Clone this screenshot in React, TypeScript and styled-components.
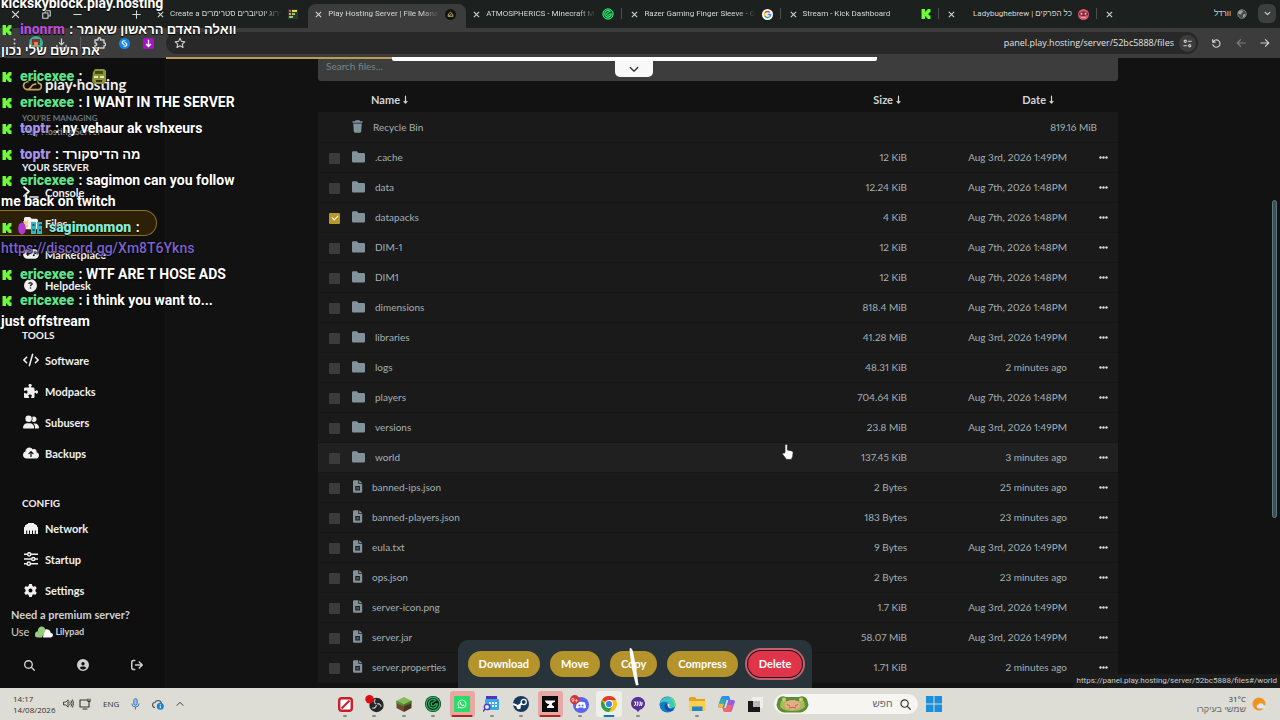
import React from 'react';
import styled, { createGlobalStyle, css } from 'styled-components';
import {
  FaCode, FaPuzzlePiece, FaUserGroup, FaCloudArrowUp, FaGear, FaMagnifyingGlass, FaCircleUser,
  FaArrowRightFromBracket, FaCircleQuestion, FaGamepad, FaFolder, FaWhatsapp,
} from 'react-icons/fa6';

const pageFont = "Lato, 'Liberation Sans', sans-serif";
const chromeFont = "'Open Sans', 'Liberation Sans', sans-serif";
const smallChromeFont = "Roboto, 'Liberation Sans', sans-serif";

const GlobalStyle = createGlobalStyle`
  * { box-sizing: border-box; }
  body { margin: 0; background: #121212; }
  button { border: 0; padding: 0; background: none; color: inherit; font: inherit; }
  a { color: inherit; text-decoration: none; }
  svg { display: block; flex: none; }
`;

const Screen = styled.div`
  position: relative;
  display: flex;
  flex-direction: column;
  height: 100vh;
  min-width: 1000px;
  overflow: hidden;
  font-family: ${pageFont};
`;

/* ---------- browser frame ---------- */

const TabStrip = styled.header`
  flex: none;
  display: flex;
  height: 28px;
  background: #1c201f;
  font: 8px/14px ${smallChromeFont};
  color: #d5d8d7;
`;

const WindowControls = styled.div`
  flex: none;
  display: flex;
  align-items: center;
  justify-content: space-between;
  width: 150px;
  padding: 0 8px 0 9px;
`;

const ControlButton = styled.button<{ $push?: boolean }>`
  display: grid;
  place-items: center;
  width: 12px;
  height: 20px;
  margin-left: ${p => (p.$push ? '28px' : '0')};
`;

const TabList = styled.nav`
  flex: 1;
  min-width: 0;
  display: flex;
`;

const Tab = styled.div<{ $active?: boolean; $divider?: boolean }>`
  position: relative;
  flex: 1;
  min-width: 0;
  display: flex;
  align-items: center;
  gap: 6px;
  padding: 0 10px 4px 7px;
  margin-top: 4px;
  border-radius: 8px 8px 0 0;
  ${p => p.$active && css`background: #3c3c3c;`}
  ${p => p.$divider && css`
    &::after {
      content: '';
      position: absolute;
      right: 2px;
      top: 4px;
      width: 1px;
      height: 11px;
      background: #4b504e;
    }
  `}
`;

const TabTitle = styled.span<{ $rtl?: boolean }>`
  flex: 1;
  min-width: 0;
  overflow: hidden;
  white-space: nowrap;
  text-align: ${p => (p.$rtl ? 'right' : 'left')};
  mask-image: ${p => (p.$rtl ? 'none' : 'linear-gradient(to right, #000 84%, transparent)')};
`;

const TabSearch = styled.button`
  flex: none;
  display: grid;
  place-items: center;
  width: 18px;
  height: 19px;
  margin: 4px 4px 0 1px;
  border-radius: 6px;
  background: #3c3f3e;
`;

const Toolbar = styled.div`
  flex: none;
  display: flex;
  align-items: center;
  height: 30px;
  background: #3c3c3c;
  color: #cfcfcf;
`;

const ToolGroup = styled.div<{ $width: number; $pad: string }>`
  flex: none;
  display: flex;
  align-items: center;
  justify-content: space-between;
  width: ${p => p.$width}px;
  padding: ${p => p.$pad};
`;

const ToolButton = styled.button<{ $dim?: boolean }>`
  opacity: ${p => (p.$dim ? 0.45 : 1)};
`;

const ToolDivider = styled.span`
  width: 1px;
  height: 12px;
  background: #5a5a5a;
`;

const AddressBar = styled.div`
  flex: 1;
  display: flex;
  align-items: center;
  justify-content: space-between;
  gap: 5px;
  height: 22px;
  padding: 0 2px 0 8px;
  border-radius: 11px;
  background: #282828;
`;

const AddressInput = styled.input`
  flex: 1;
  min-width: 0;
  border: 0;
  padding: 0;
  background: none;
  color: #e2e2e2;
  font: 9px/16px ${chromeFont};
  text-align: right;
`;

const SiteInfo = styled.button`
  display: grid;
  place-items: center;
  width: 17px;
  height: 17px;
  border-radius: 9px;
  background: #3d3d3d;
`;

/* ---------- panel page ---------- */

const Viewport = styled.div`
  position: relative;
  flex: 1;
  min-height: 0;
  display: flex;
  background: #121212;
`;

const Sidebar = styled.aside`
  flex: none;
  display: flex;
  flex-direction: column;
  width: 166px;
  padding-top: 14px;
  border-right: 1px solid #131313;
  background: #0f0f0f;
  color: #f0f0f0;
`;

const Brand = styled.a`
  display: flex;
  align-items: center;
  gap: 3px;
  height: 24px;
  padding-left: 22px;
  font-size: 15px;
  font-weight: 700;
`;

const Managing = styled.p`
  margin: 16px 0 0;
  padding-left: 22px;
  font-size: 8px;
  line-height: 13px;
  font-weight: 700;
  color: #6b757e;
`;

const ServerName = styled.span`
  display: block;
  font-size: 9px;
  color: #8a8a8a;
`;

const NavSection = styled.section<{ $gap: number }>`
  display: flex;
  flex-direction: column;
  gap: 5px;
  margin-top: ${p => p.$gap}px;
`;

const NavHeading = styled.h2`
  margin: 0;
  padding-left: 22px;
  font-size: 10px;
  line-height: 14px;
  font-weight: 700;
`;

const NavLink = styled.a<{ $active?: boolean }>`
  display: flex;
  align-items: center;
  gap: 6px;
  height: 26px;
  margin-right: 8px;
  padding-left: 22px;
  border: 1px solid ${p => (p.$active ? '#8b7224' : 'transparent')};
  border-left: 0;
  border-radius: 0 13px 13px 0;
  background: ${p => (p.$active ? '#2c2106' : 'transparent')};
  font-size: 11px;
  font-weight: 700;
`;

const NavIcon = styled.span`
  display: grid;
  place-items: center;
  width: 17px;
`;

const Promo = styled.div`
  margin-top: auto;
  padding-left: 11px;
  font-size: 11px;
  line-height: 17px;
  font-weight: 700;
  color: #cdd0d2;
`;

const PromoLink = styled.a`
  display: flex;
  align-items: center;
  gap: 6px;
  font-weight: 400;
`;

const LilypadName = styled.span`
  display: flex;
  align-items: center;
  gap: 2px;
  font-size: 9px;
  font-weight: 700;
`;

const SidebarTools = styled.div`
  display: flex;
  justify-content: space-between;
  padding: 19px 22px 17px 24px;
  color: #d0d0d0;
`;

const Main = styled.main`
  flex: 1;
  min-width: 0;
  overflow: hidden;
  display: flex;
  flex-direction: column;
  align-items: center;
`;

const Files = styled.div`
  width: 100%;
  max-width: 800px;
`;

const SearchInput = styled.input`
  display: block;
  width: 100%;
  height: 23px;
  padding: 0 8px 7px;
  border: 0;
  border-radius: 0 0 3px 3px;
  background: #3d3d3d;
  color: #d0d0d0;
  font: 10px/16px ${pageFont};
  &::placeholder { color: #77858c; opacity: 1; }
`;

const FileTable = styled.table`
  width: 100%;
  table-layout: fixed;
  border-collapse: collapse;
  font-size: 10px;
  font-variant-numeric: proportional-nums;
  color: #a3b0b5;
`;

const HeadCell = styled.th<{ $width?: number; $right?: number }>`
  width: ${p => (p.$width ? `${p.$width}px` : 'auto')};
  height: 31px;
  padding: 5px ${p => p.$right ?? 0}px 0 0;
  text-align: ${p => (p.$right ? 'right' : 'left')};
  font-size: 11px;
  font-weight: 700;
  color: #cfd5d6;
`;

const SortButton = styled.button<{ $indent?: boolean }>`
  display: inline-flex;
  align-items: center;
  gap: 3px;
  padding-left: ${p => (p.$indent ? '19px' : '0')};
`;

const Row = styled.tr<{ $hover?: boolean }>`
  height: 30px;
  background: ${p => (p.$hover ? '#202020' : '#1a1a1a')};
  border-bottom: 1px solid #161616;
`;

const Cell = styled.td<{ $right?: boolean }>`
  padding: 0;
  text-align: ${p => (p.$right ? 'right' : 'left')};
  white-space: nowrap;
`;

const EndCell = styled(Cell)`
  padding-right: 21px;
`;

const CheckCell = styled(Cell)`
  padding: 2px 0 0 11px;
`;

const Check = styled.input`
  display: grid;
  place-items: center;
  appearance: none;
  width: 11px;
  height: 11px;
  margin: 0;
  border-radius: 1px;
  background: #3b3b3b;
  &:checked { background: #b8962a; }
  &:checked::after {
    content: '';
    width: 5px;
    height: 3px;
    border: solid #fff;
    border-width: 0 0 1px 1px;
    rotate: -45deg;
    translate: 0 -1px;
  }
`;

const FileLink = styled.a<{ $folder?: boolean }>`
  display: flex;
  align-items: center;
  gap: ${p => (p.$folder ? '10px' : '9px')};
  color: #a3b0b5;
  svg { color: #82929a; margin-bottom: 1px; }
`;

const MoreButton = styled.button`
  display: block;
  margin-left: 32px;
  color: #e0e0e0;
`;

const ScrollTrack = styled.div`
  flex: none;
  width: 10px;
  padding: 142px 3px 0 2px;
`;

const ScrollThumb = styled.div`
  height: 318px;
  border: 1px solid #5c7880;
  border-radius: 3px;
  background: #3c4f56;
`;

/* ---------- things that float over the page ---------- */

const LoadingLine = styled.div`
  position: absolute;
  left: 166px;
  right: 69%;
  top: -1px;
  height: 2px;
  background: #b89f55;
`;

const Drawer = styled.div`
  position: absolute;
  left: 0;
  right: 12px;
  top: -1px;
  display: flex;
  flex-direction: column;
  align-items: center;
  pointer-events: none;
`;

const DrawerEdge = styled.div`
  width: 485px;
  height: 4px;
  border-radius: 0 0 2px 2px;
  background: #fff;
`;

const DrawerHandle = styled.button`
  display: grid;
  place-items: center;
  width: 38px;
  height: 16px;
  border-radius: 0 0 5px 5px;
  background: #f8f8f8;
  color: #333;
`;

const ActionLayer = styled.div`
  position: absolute;
  left: 0;
  right: 10px;
  bottom: 0;
  display: flex;
  justify-content: center;
`;

const ActionBar = styled.div`
  display: flex;
  gap: 10px;
  height: 48px;
  padding: 11px 10px 0;
  border-radius: 10px 10px 0 0;
  background: #28343a;
`;

const ActionButton = styled.button<{ $danger?: boolean }>`
  height: 26px;
  padding: 0 11px 1px;
  border-radius: 13px;
  background: ${p => (p.$danger ? '#e0344a' : '#b4942b')};
  color: #fff;
  font-size: 11px;
  font-weight: 700;
  ${p => p.$danger && css`box-shadow: 0 0 0 1px #241318, 0 0 0 3px #c2606e;`}
`;

const Slash = styled.svg`
  position: absolute;
  left: 628px;
  bottom: 0;
`;

const Pointer = styled.svg`
  position: absolute;
  left: 781px;
  top: 385px;
`;

const StatusBubble = styled.div`
  position: absolute;
  right: 0;
  bottom: 0;
  padding: 0 3px 0 4px;
  background: #1b1b1b;
  color: #c9cccc;
  font: 8px/14px ${smallChromeFont};
`;

const Chat = styled.section`
  position: absolute;
  left: 0;
  top: -9px;
  color: #fff;
  font: 700 14px/21px Roboto, 'Liberation Sans', sans-serif;
  text-shadow: 0 0 1px #000, 0 1px 1px #000;
  white-space: nowrap;
`;

const Message = styled.p`
  margin: 0;
  padding: 2px 1px 3px;
`;

const MessageLine = styled.span`
  display: flex;
  align-items: center;
  height: 21px;
`;

const Badges = styled.span<{ $wide?: boolean }>`
  display: flex;
  align-items: center;
  gap: 5px;
  width: ${p => (p.$wide ? '48px' : '19px')};
  padding-left: 1px;
`;

const Author = styled.b<{ $color: string }>`
  margin-right: 1px;
  color: ${p => p.$color};
`;

const Body = styled.span<{ $hebrew?: boolean }>`
  font-size: ${p => (p.$hebrew ? '13px' : '14px')};
  white-space: pre;
`;

const ChatLink = styled.a`
  color: #7d62cc;
  font-weight: 500;
`;

/* ---------- taskbar ---------- */

const Taskbar = styled.footer`
  flex: none;
  display: grid;
  grid-template-columns: 1fr auto 1fr;
  align-items: center;
  height: 32px;
  background: #dddcd5;
  color: #333;
  font: 8px/10px ${chromeFont};
`;

const Tray = styled.div`
  display: flex;
  align-items: center;
  padding-left: 13px;
`;

const Clock = styled.time`
  width: 50px;
  line-height: 11px;
`;

const TrayIcons = styled.div`
  display: flex;
  align-items: center;
  gap: 12px;
`;

const TrayPair = styled.div`
  display: flex;
  gap: 5px;
`;

const Dock = styled.div`
  display: flex;
  align-items: center;
`;

const Apps = styled.div`
  display: flex;
  width: 440px;
`;

const AppButton = styled.button<{ $tint?: string; $mark?: string }>`
  position: relative;
  flex: 1;
  display: grid;
  place-items: center;
  height: 26px;
  margin: 0 2px;
  border-radius: 3px;
  background: ${p => p.$tint ?? 'transparent'};
  &::after {
    content: '';
    position: absolute;
    left: 50%;
    bottom: 0;
    width: ${p => (p.$tint ? (p.$mark === '#b3261e' ? 21 : 11) : 4)}px;
    height: 2px;
    border-radius: 1px;
    translate: -50% 0;
    background: ${p => p.$mark ?? 'transparent'};
  }
`;

const SearchPill = styled.label`
  display: flex;
  align-items: center;
  gap: 7px;
  width: 144px;
  height: 20px;
  margin-left: 3px;
  padding: 0 7px 0 2px;
  border-radius: 10px;
  background: #f6f5f1;
`;

const PillInput = styled.input`
  flex: 1;
  min-width: 0;
  border: 0;
  padding: 0;
  background: none;
  font: 10px/14px 'Liberation Sans', sans-serif;
  text-align: right;
  &::placeholder { color: #666; opacity: 1; }
`;

const StartButton = styled.button`
  display: grid;
  place-items: center;
  width: 32px;
  height: 26px;
`;

const Weather = styled.div`
  display: flex;
  align-items: center;
  justify-content: flex-end;
  gap: 6px;
  padding-right: 13px;
  text-align: right;
  line-height: 10px;
`;

const WeatherNote = styled.span`
  display: block;
  color: #6a6a66;
  font: 9px/10px 'Liberation Sans', sans-serif;
`;

/* ---------- drawings ---------- */

const CrossIcon = ({ size = 7 }: { size?: number }) => (
  <svg width={size} height={size} viewBox="0 0 8 8" stroke="currentColor" strokeWidth="1.2"><path d="M1 1l6 6M7 1L1 7" /></svg>
);

const KickMark = ({ size = 10 }: { size?: number }) => (
  <svg width={size} height={size} viewBox="0 0 10 10"><rect width="10" height="10" fill="#0b1a06" /><path fill="#6dfb3a" d="M.5 0h3.500v2.500h1.200V1.200h1.200V0h3.100v3.500H8.300v1H7.300v1h1v1h1.200V10H6.400V8.800H5.200V7.500H4V10H.5z" /></svg>
);

const CloudLoop = ({ w = 20, h = 14, color = '#c9a552' }) => (
  <svg width={w} height={h} viewBox="0 0 20 14" fill="none" stroke={color} strokeWidth="1.7" strokeLinecap="round" strokeLinejoin="round">
    <path d="M5 12.6h11a3.2 3.2 0 0 0 .4-6.4A5.2 5.2 0 0 0 6.3 4.6 4 4 0 0 0 5 12.6c2.500 0 3.300-1.700 4.400-3.200 1-1.500 2.300-2.500 4.200-2.200" />
  </svg>
);

const GoogleMark = () => (
  <svg width="11" height="11" viewBox="0 0 22 22">
    <circle cx="11" cy="11" r="11" fill="#fff" />
    <g fill="none" strokeWidth="3">
      <path d="M15.600 6.800A6.200 6.200 0 0 0 5.700 8" stroke="#ea4335" />
      <path d="M5.700 8a6.200 6.200 0 0 0 0 6" stroke="#fbbc05" />
      <path d="M5.700 14a6.200 6.200 0 0 0 9.500 1.600" stroke="#34a853" />
      <path d="M15.200 15.600A6.200 6.200 0 0 0 17.200 11H11" stroke="#4285f4" />
    </g>
  </svg>
);

const SwirlMark = ({ size, bg, fg }: { size: number; bg: string; fg: string }) => (
  <svg width={size} height={size} viewBox="0 0 22 22" fill="none">
    <circle cx="11" cy="11" r="11" fill={bg} />
    <circle cx="11" cy="11" r="9.300" stroke={fg} strokeWidth="1.800" />
    <path d="M15.500 6.700A6 6 0 1 0 17 11h-3.500" stroke={fg} strokeWidth="1.900" />
    <path d="M13.500 11A2.500 2.500 0 1 1 11 8.500L14.500 6" stroke={fg} strokeWidth="1.700" />
  </svg>
);

const TableMark = () => (
  <svg width="10" height="10" viewBox="0 0 10 10"><rect width="10" height="10" fill="#333" />
    <path fill="#e0554f" d="M1 1h2v2H1z" /><path fill="#e6a645" d="M1 4h2v2H1z" /><path fill="#7ed957" d="M1 7h4v2H1z" />
    <path fill="#e8d75b" d="M4 1h5v2H4z" /><path fill="#7ed957" d="M4 4h3v2H4z" />
  </svg>
);

const LadybugMark = () => (
  <svg width="11" height="11" viewBox="0 0 11 11"><circle cx="5.500" cy="5.500" r="5.500" fill="#d4596c" /><path d="M1 4q4.500-3 9 0v2q-4.500 2-9 0z" fill="#7d2535" /><circle cx="3.500" cy="4.800" r="1" fill="#f4c7ce" /><circle cx="7.500" cy="4.800" r="1" fill="#f4c7ce" /><path d="M3 8.500h5" stroke="#f0a0ad" /></svg>
);

const GlobeMark = () => (
  <svg width="10" height="10" viewBox="0 0 10 10"><circle cx="5" cy="5" r="4.300" fill="#454a48" stroke="#8a8f8d" strokeWidth=".8" /><path fill="#9da19f" d="M2 2l3-.8L6 3 4.500 4 4 5.500 2 5 1 4zM6 5.500l2.500-.5-.5 2.500-2 1z" /></svg>
);

const Line = ({ d, w = 10, h = 10, box = '0 0 12 12', sw = 1.4 }: { d: string; w?: number; h?: number; box?: string; sw?: number }) => (
  <svg width={w} height={h} viewBox={box} fill="none" stroke="currentColor" strokeWidth={sw} strokeLinecap="round" strokeLinejoin="round"><path d={d} /></svg>
);

const FolderIcon = () => (
  <svg width="13" height="12" viewBox="0 0 13 12" fill="currentColor"><path d="M1.300.3h3.500l1.700 1.600h5.200A1.300 1.300 0 0 1 13 3.200v7A1.300 1.300 0 0 1 11.700 11.500H1.300A1.300 1.300 0 0 1 0 10.200V1.600A1.300 1.300 0 0 1 1.300.3z" /></svg>
);

const FileIcon = () => (
  <svg width="11" height="13" viewBox="0 0 11 13" fill="currentColor" fillRule="evenodd"><path d="M2.300.3h4v3.500h3.900v7.600a1.300 1.300 0 0 1-1.300 1.300H2.300A1.300 1.300 0 0 1 1 11.400V1.600A1.300 1.300 0 0 1 2.300.3zM3.300 6v4.500h4.600V6zM7.200.3l3 2.700h-3z" /><path d="M4.300 7h2.600v2.500H4.300z" opacity=".5" /></svg>
);

const TrashIcon = () => (
  <svg width="11" height="13" viewBox="0 0 11 13" fill="currentColor"><path d="M3.500.3h4l.5.900h2.500v1.600H.500V1.200H3zM1.200 3.500h8.600l-.6 8.100a1.200 1.200 0 0 1-1.200 1.100H3a1.200 1.200 0 0 1-1.200-1.100z" /></svg>
);

const DotsIcon = () => (
  <svg width="9" height="3" viewBox="0 0 9 3" fill="currentColor"><circle cx="1.500" cy="1.500" r="1.200" /><circle cx="4.500" cy="1.500" r="1.200" /><circle cx="7.500" cy="1.500" r="1.200" /></svg>
);

const ArrowDown = () => <Line w={5} h={9} box="0 0 5 9" sw={1.2} d="M2.500 1v7M1 6.400l1.500 1.600L4 6.400" />;

const NetworkIcon = () => (
  <svg width="14" height="11" viewBox="0 0 14 11" fill="currentColor"><path d="M4 0h6v1h1.500v1H13v2h1v7h-2.200V7.500h-1V11H9V7.500H8V11H6V7.500H5V11H3.200V7.500h-1V11H0V4h1V2h1.500V1H4z" /></svg>
);

const SlidersIcon = () => (
  <svg width="14" height="14" viewBox="0 0 14 14" fill="none" stroke="currentColor" strokeWidth="1.500"><path d="M0 2.300h3.500M7 2.300h7M0 7h7.500M11 7h3M0 11.700h3M6.500 11.700H14" /><circle cx="5.200" cy="2.300" r="1.600" /><circle cx="9.300" cy="7" r="1.600" /><circle cx="4.800" cy="11.700" r="1.600" /></svg>
);

const LilypadIcon = () => (
  <svg width="18" height="12" viewBox="0 0 18 12"><path d="M8 11.500h7.500a2.300 2.300 0 0 0 .3-4.600A4 4 0 0 0 9 4.500z" fill="#fff" /><path d="M0 8.500C0 6 1.500 5.500 3 5.300 2.500 2.500 4.500.3 7 .5c3 .3 4 3 2.800 5.500C8.700 8.500 7.500 9.500 7 11.500H2.500A2.600 2.600 0 0 1 0 8.500z" fill="#94cc7c" /></svg>
);

const ChromeIcon = () => (
  <svg width="16" height="16" viewBox="0 0 16 16"><circle cx="8" cy="8" r="8" fill="#fbc116" /><path d="M8 8L1.070 4A8 8 0 0 1 14.930 4H8z" fill="#e33b2e" /><path d="M1.070 4A8 8 0 0 0 8 16l3.460-6L8 8l-3.460 2z" fill="#2ba24c" /><circle cx="8" cy="8" r="4" fill="#fff" /><circle cx="8" cy="8" r="3.100" fill="#3f7ff0" /></svg>
);

const dockApps: { name: string; tint?: string; mark?: string; icon: React.ReactNode }[] = [
  { name: 'Stop tool', mark: '#8b8b86', icon: <svg width="15" height="15" viewBox="0 0 15 15" fill="none"><rect x="1.200" y="1.200" width="12.600" height="12.600" rx="2.500" fill="#fff" stroke="#c71f2d" strokeWidth="2.400" /><path d="M3.500 11.500L11.500 3.500" stroke="#c71f2d" strokeWidth="2" /></svg> },
  { name: 'OBS', mark: '#8b8b86', icon: <svg width="19" height="18" viewBox="0 0 19 18"><circle cx="11.500" cy="10" r="7.200" fill="#25262a" /><g fill="none" stroke="#b9babd" strokeWidth="1.300"><path d="M11 9c-2-1-2.200-3.500-.5-4.700" /><path d="M11.800 9c2-.8 4.200.5 4.200 2.700" /><path d="M11.300 10c0 2.300-2 3.700-4 2.800" /></g><circle cx="4.500" cy="4.300" r="4.200" fill="#e30b13" /></svg> },
  { name: 'Minecraft', mark: '#8b8b86', icon: <svg width="16" height="17" viewBox="0 0 16 17"><path d="M8 1l7.500 3.700L8 8.500.5 4.700z" fill="#84bd53" /><path d="M.5 4.700L8 8.500V16L.500 12z" fill="#6d4a30" /><path d="M15.500 4.700L8 8.500V16l7.500-4z" fill="#4e3420" /><path d="M.5 4.700L8 8.500v2L6 9v1.500L4 8v1.500L2 7.500 .5 8z" fill="#57913a" /><path d="M15.500 4.700L8 8.500v2l2-1.500v1l2-2v1l3.500-2z" fill="#467a2e" /></svg> },
  { name: 'Swirl', mark: '#8b8b86', icon: <SwirlMark size={16} bg="#0c1a12" fg="#24b862" /> },
  { name: 'WhatsApp', tint: '#e5a8a5', mark: '#b3261e', icon: <svg width="16" height="16" viewBox="0 0 16 16"><rect width="16" height="16" rx="1" fill="#2bdc68" /><g color="#fff"><FaWhatsapp x="3" y="3" size={10} /></g></svg> },
  { name: 'Search calendar', mark: '#8b8b86', icon: <svg width="17" height="16" viewBox="0 0 17 16"><rect x="3" y="0" width="11" height="4" fill="#5433b8" /><rect x="2" y="3" width="14" height="11" rx="1" fill="#36a8ef" /><g fill="#fff"><path d="M6 6h2v2H6zM9 6h2v2H9zM12 6h2v2h-2zM9 9h2v2H9zM12 9h2v2h-2z" /></g><circle cx="4" cy="11" r="2.700" fill="#dceafc" stroke="#5136b5" strokeWidth="1.300" /><path d="M2 13l-2 2.500" stroke="#5136b5" strokeWidth="1.500" /></svg> },
  { name: 'Steam', mark: '#8b8b86', icon: <svg width="16" height="16" viewBox="0 0 16 16"><circle cx="8" cy="8" r="8" fill="#17395f" /><path d="M0 8l5 2.200 3-2 3-3.500" stroke="#fff" strokeWidth="2" fill="none" /><circle cx="10.700" cy="6" r="2.600" fill="#17395f" stroke="#fff" strokeWidth="1.200" /><circle cx="5.700" cy="11" r="2.200" fill="#fff" /></svg> },
  { name: 'Anvil', tint: '#e5a8a5', mark: '#b3261e', icon: <svg width="16" height="16" viewBox="0 0 16 16"><rect width="16" height="16" fill="#0c0c0c" /><path fill="#fff" d="M3 4.500h10V6c-2 0-3 1-3 2v1l2 1.500V12H5v-1.500L7 9V8C5 8 3.500 6.500 3 4.500z" /></svg> },
  { name: 'Discord', mark: '#8b8b86', icon: <svg width="19" height="18" viewBox="0 0 19 18"><circle cx="11" cy="10" r="8" fill="#5865f2" /><path fill="#fff" d="M7 7.500q4-1.600 8 0l1.200 5q-1.200 1-2.400 1l-.6-1H8.800l-.6 1q-1.200 0-2.400-1z" /><circle cx="9.400" cy="10.500" r="1" fill="#5865f2" /><circle cx="12.600" cy="10.500" r="1" fill="#5865f2" /><circle cx="4.700" cy="4.700" r="4.700" fill="#d0343c" /><text x="4.700" y="7" textAnchor="middle" fontSize="6" fill="#fff" fontFamily="Roboto">9+</text></svg> },
  { name: 'Chrome', tint: '#eeeeea', mark: '#1473b8', icon: <ChromeIcon /> },
  { name: 'Voice chat', mark: '#8b8b86', icon: <svg width="14" height="15" viewBox="0 0 14 15"><path d="M7 0a6.500 6.500 0 0 1 2 12.800L7 15l-2-2.200A6.500 6.500 0 0 1 7 0z" fill="#57309c" /><path d="M3.200 5h1.300v2.200L3.500 9M5.800 5h1v2.200l-1 1.800M8.500 5h.8v2.200l-1 1.800M11 5v2.200L10 9" stroke="#fff" strokeWidth="1.100" fill="none" /></svg> },
  { name: 'Edge', icon: <svg width="17" height="17" viewBox="0 0 17 17"><circle cx="8.500" cy="8.500" r="8" fill="#1479c9" /><path d="M.7 7.500A8 8 0 0 1 16.500 8c0 3-2.500 4-4.500 4-1.500 0-2-.8-1.500-1.500C12 7 6 3.500.7 7.500z" fill="#3fc6c0" /><path d="M10 1a8 8 0 0 1 6.500 7c0 1.500-.6 2.600-1.500 3.200C15.500 7 13 3 10 1z" fill="#6adf6a" /><path d="M6 8.500c-1.500 3 1 7 6 6.500 1.500-.2 2.500-1 3-1.600C11 14 8 12 8.500 8.500 8 7.500 6.500 7.500 6 8.500z" fill="#0d4f9c" /><path d="M10.500 10.500C11.500 8.500 10 7 8.500 7.800 8 9.500 9 11.500 11 12.200l2-.3c-1.500.1-3-.4-2.500-1.400z" fill="#dddcd5" /></svg> },
  { name: 'Explorer', mark: '#8b8b86', icon: <svg width="17" height="15" viewBox="0 0 17 15"><path d="M0 1.500Q0 0 1.500 0H6l1.500 2H16v11.500H0z" fill="#e2a322" /><path d="M0 4h16.500v9.500H0z" fill="#fbd14b" /><path d="M3 9.500h10.500V14H3z" fill="#2382cd" /></svg> },
  { name: 'Copilot', icon: <svg width="17" height="16" viewBox="0 0 17 16"><path d="M5 0h6l1.500 4H8.500L6 12H2C.500 12 0 10.500.5 9L3 1.500Q3.500 0 5 0z" fill="#2f8fea" /><path d="M1 7.500h5L4.500 12H2Q0 12 .500 9.500z" fill="#f4b83a" /><path d="M12 16H6l-1.500-4H8l2.500-8H15q2 0 1.500 3L14 14.500Q13.500 16 12 16z" fill="#c35ad0" /><path d="M4.500 12H8l1.500-4H14l-2 8H6z" fill="#ee6a6a" /><path d="M10.500 4L9 9h5l2.500-2Q17 4 15 4z" fill="#8c62e0" /><path d="M2.500 3L1 7.500h5L7.500 3z" fill="#31b98b" opacity=".7" /></svg> },
  { name: 'Window layout', icon: <svg width="15" height="15" viewBox="0 0 15 15"><rect x="4" y="0" width="11" height="11" fill="#efefec" /><path d="M0 4h5v6h7v5H0z" fill="#191919" /><path d="M5 4h7v6H5z" fill="#b9b9b5" /></svg> },
];

/* ---------- data ---------- */

const tabs: { title: string; icon: React.ReactNode; active?: boolean; divider?: boolean; rtl?: boolean }[] = [
  { title: 'Create a דירוג יוטיוברים סטרימרים', icon: <TableMark /> },
  { title: 'Play Hosting Server | File Manager', active: true, icon: <svg width="11" height="11" viewBox="0 0 11 11"><circle cx="5.500" cy="5.500" r="5.500" fill="#141414" /><path d="M3 7.300h5L7.500 5 5.500 3.300 3.500 5zM4 7l2.500-2" fill="none" stroke="#c9b752" strokeWidth=".9" /></svg> },
  { title: 'ATMOSPHERICS - Minecraft Modpack', divider: true, icon: <SwirlMark size={12} bg="#0f5a2c" fg="#38ef79" /> },
  { title: 'Razer Gaming Finger Sleeve - Google', divider: true, icon: <GoogleMark /> },
  { title: 'Stream - Kick Dashboard', divider: true, icon: <KickMark /> },
  { title: 'כל הפרקים | Ladybughebrew', divider: true, rtl: true, icon: <LadybugMark /> },
  { title: 'וורדל', rtl: true, icon: <GlobeMark /> },
];

const navSections = [
  { title: 'YOUR SERVER', gap: 22, items: [
    { label: 'Console', icon: <Line w={16} h={12} box="0 0 16 12" sw={1.7} d="M1 1l5 4.500L1 10M7 11h8" /> },
    { label: 'Files', active: true, icon: <FaFolder size={14} /> },
    { label: 'Marketplace', icon: <FaGamepad size={16} /> },
    { label: 'Helpdesk', icon: <FaCircleQuestion size={13} /> },
  ] },
  { title: 'TOOLS', gap: 30, items: [
    { label: 'Software', icon: <FaCode size={16} /> },
    { label: 'Modpacks', icon: <FaPuzzlePiece size={14} /> },
    { label: 'Subusers', icon: <FaUserGroup size={16} /> },
    { label: 'Backups', icon: <FaCloudArrowUp size={16} /> },
  ] },
  { title: 'CONFIG', gap: 30, items: [
    { label: 'Network', icon: <NetworkIcon /> },
    { label: 'Startup', icon: <SlidersIcon /> },
    { label: 'Settings', icon: <FaGear size={13} /> },
  ] },
];

const AUG3 = 'Aug 3rd, 2026 1:49PM';
const AUG7 = 'Aug 7th, 2026 1:48PM';

const files: [string, string, string, ('folder' | 'file')][] = [
  ['.cache', '12 KiB', AUG3, 'folder'],
  ['data', '12.24 KiB', AUG7, 'folder'],
  ['datapacks', '4 KiB', AUG7, 'folder'],
  ['DIM-1', '12 KiB', AUG7, 'folder'],
  ['DIM1', '12 KiB', AUG7, 'folder'],
  ['dimensions', '818.4 MiB', AUG7, 'folder'],
  ['libraries', '41.28 MiB', AUG3, 'folder'],
  ['logs', '48.31 KiB', '2 minutes ago', 'folder'],
  ['players', '704.64 KiB', AUG7, 'folder'],
  ['versions', '23.8 MiB', AUG3, 'folder'],
  ['world', '137.45 KiB', '3 minutes ago', 'folder'],
  ['banned-ips.json', '2 Bytes', '25 minutes ago', 'file'],
  ['banned-players.json', '183 Bytes', '23 minutes ago', 'file'],
  ['eula.txt', '9 Bytes', AUG3, 'file'],
  ['ops.json', '2 Bytes', '23 minutes ago', 'file'],
  ['server-icon.png', '1.7 KiB', AUG3, 'file'],
  ['server.jar', '58.07 MiB', AUG3, 'file'],
  ['server.properties', '1.71 KiB', '2 minutes ago', 'file'],
];

const GREEN = '#5fe38a';
const LILAC = '#a493e8';

const chat: { author?: string; color?: string; text: React.ReactNode; more?: React.ReactNode; fan?: boolean; hebrew?: boolean }[] = [
  { text: 'kickskyblock.play.hosting' },
  { author: 'inonrm', color: '#b44fd0', hebrew: true, text: 'וואלה האדם הראשון שאומר', more: 'את השם שלי נכון' },
  { author: 'ericexee', color: GREEN, text: <svg width="22" height="17" viewBox="0 0 22 17"><g transform="translate(4 0)"><path d="M5 1h9l2 2v10l-2 3H4l-2-3 1-9z" fill="#8d9437" /><path d="M5 3h8v3H5z" fill="#444a18" /><path d="M4 8h4v2H4zM10 8h4v2h-4z" fill="#e7e9b0" /><path d="M6 12h6v2H6z" fill="#2f3312" /></g></svg> },
  { author: 'ericexee', color: GREEN, text: 'I WANT IN THE SERVER' },
  { author: 'toptr', color: LILAC, text: 'ny vehaur ak vshxeurs' },
  { author: 'toptr', color: LILAC, hebrew: true, text: 'מה הדיסקורד' },
  { author: 'ericexee', color: GREEN, text: 'sagimon can you follow', more: 'me back on twitch' },
  { author: 'sagimonmon', color: '#8ce8d5', fan: true, text: '', more: <ChatLink href="#discord">https://discord.gg/Xm8T6Ykns</ChatLink> },
  { author: 'ericexee', color: GREEN, text: 'WTF ARE T HOSE ADS' },
  { author: 'ericexee', color: GREEN, text: 'i think you want to...', more: 'just offstream' },
];

/* ---------- page ---------- */

export default function App() {
  return (
    <Screen>
      <GlobalStyle />
      <TabStrip>
        <WindowControls>
          <ControlButton aria-label="Close"><CrossIcon size={9} /></ControlButton>
          <ControlButton aria-label="Restore"><Line w={9} h={9} d="M1 4h7v7H1zM4 4V1h7v7H8" /></ControlButton>
          <ControlButton aria-label="Minimize"><Line w={9} h={9} d="M1 6h10" /></ControlButton>
          <ControlButton aria-label="New tab" $push><Line w={9} h={9} d="M6 1v10M1 6h10" /></ControlButton>
        </WindowControls>
        <TabList>
          {tabs.map(t => (
            <Tab key={t.title} $active={t.active} $divider={t.divider}>
              <button aria-label="Close tab"><CrossIcon /></button>
              <TabTitle $rtl={t.rtl} dir={t.rtl ? 'rtl' : 'ltr'}>{t.title}</TabTitle>
              {t.icon}
            </Tab>
          ))}
        </TabList>
        <TabSearch aria-label="Search tabs"><Line w={7} h={7} sw={2} d="M2 4l4 4 4-4" /></TabSearch>
      </TabStrip>
      <Toolbar>
        <ToolGroup $width={166} $pad="0 12px 0 13px">
          <svg width="3" height="11" viewBox="0 0 3 11" fill="currentColor"><circle cx="1.500" cy="1.500" r="1" /><circle cx="1.500" cy="5.500" r="1" /><circle cx="1.500" cy="9.500" r="1" /></svg>
          <svg width="14" height="14" viewBox="0 0 14 14"><circle cx="7" cy="7" r="7" fill="#2fb598" /><path d="M3 3h8v6H3z" fill="#8e2f2c" /><path d="M5 6h4v5H5z" fill="#c98b62" /><path d="M3 11h8v2H3z" fill="#2c2a28" /></svg>
          <Line w={11} h={11} d="M6 1v6M3.500 5L6 7.500 8.500 5M1 8v3h10V8" />
          <ToolDivider />
          <Line w={12} h={12} d="M1 3h3V2a1.300 1.300 0 0 1 2.600 0v1H10v3h.500a1.300 1.300 0 0 1 0 2.600H10V11H1V8.500h.500a1.200 1.200 0 0 0 0-2.500H1z" />
          <svg width="11" height="11" viewBox="0 0 12 12"><circle cx="6" cy="6" r="6" fill="#1288e8" /><path d="M6.500 3.200C4.500 2.600 2.500 4.500 4 6l1.500 1.200M5.500 8.800C7.500 9.400 9.500 7.500 8 6L6.500 4.800" stroke="#fff" strokeWidth="1.200" fill="none" strokeLinecap="round" /></svg>
          <svg width="11" height="11" viewBox="0 0 12 12"><rect width="12" height="12" rx="1.500" fill="#a512c4" /><path d="M6 2v7M3.300 6.500L6 9.200l2.700-2.700" stroke="#fff" strokeWidth="1.500" fill="none" /></svg>
        </ToolGroup>
        <AddressBar>
          <Line w={12} h={12} box="0 0 14 14" sw={1.3} d="M7 1.500l1.700 3.600 3.900.500-2.900 2.700.800 3.900L7 10.300l-3.500 1.900.800-3.900L1.400 5.600l3.900-.500z" />
          <AddressInput aria-label="Address" defaultValue="panel.play.hosting/server/52bc5888/files" />
          <SiteInfo aria-label="Site information"><Line w={9} h={9} d="M1.500 3a1.500 1.500 0 1 0 3 0a1.500 1.500 0 1 0-3 0M7 3h4M7.500 9a1.500 1.500 0 1 0 3 0a1.500 1.500 0 1 0-3 0M1 9h4" /></SiteInfo>
        </AddressBar>
        <ToolGroup $width={82} $pad="0 10px 0 13px">
          <ToolButton aria-label="Reload"><Line d="M2 2v3h3M2.300 5A4.400 4.400 0 1 1 2.200 8" /></ToolButton>
          <ToolButton aria-label="Forward" $dim><Line d="M11 6H1.500M5.500 2l-4 4 4 4" /></ToolButton>
          <ToolButton aria-label="Back"><Line d="M1 6h9.500M6.500 2l4 4-4 4" /></ToolButton>
        </ToolGroup>
      </Toolbar>

      <Viewport>
        <Sidebar>
          <Brand href="#home"><CloudLoop />play·hosting</Brand>
          <Managing>YOU’RE MANAGING<ServerName>Play Hosting Server</ServerName></Managing>
          {navSections.map(s => (
            <NavSection key={s.title} $gap={s.gap}>
              <NavHeading>{s.title}</NavHeading>
              {s.items.map(i => (
                <NavLink key={i.label} href={`#${i.label}`} $active={'active' in i}>
                  <NavIcon>{i.icon}</NavIcon>{i.label}
                </NavLink>
              ))}
            </NavSection>
          ))}
          <Promo>
            Need a premium server?
            <PromoLink href="#lilypad">Use<LilypadName><LilypadIcon />Lilypad</LilypadName></PromoLink>
          </Promo>
          <SidebarTools>
            <button aria-label="Search"><FaMagnifyingGlass size={11} /></button>
            <button aria-label="Account"><FaCircleUser size={12} /></button>
            <button aria-label="Sign out"><FaArrowRightFromBracket size={12} /></button>
          </SidebarTools>
        </Sidebar>

        <Main>
          <Files>
            <SearchInput aria-label="Search files" placeholder="Search files..." />
            <FileTable>
              <thead>
                <tr>
                  <HeadCell $width={34} />
                  <HeadCell><SortButton $indent>Name<ArrowDown /></SortButton></HeadCell>
                  <HeadCell $width={120} $right={6}><SortButton>Size<ArrowDown /></SortButton></HeadCell>
                  <HeadCell $width={160} $right={13}><SortButton>Date<ArrowDown /></SortButton></HeadCell>
                  <HeadCell $width={51} />
                </tr>
              </thead>
              <tbody>
                <Row>
                  <Cell />
                  <Cell><FileLink href="#bin" $folder><TrashIcon />Recycle Bin</FileLink></Cell>
                  <Cell />
                  <EndCell $right colSpan={2}>819.16 MiB</EndCell>
                </Row>
                {files.map(([name, size, date, kind]) => (
                  <Row key={name} $hover={name === 'world'}>
                    <CheckCell><Check type="checkbox" aria-label={`Select ${name}`} defaultChecked={name === 'datapacks'} /></CheckCell>
                    <Cell>
                      <FileLink href={`#${name}`} $folder={kind === 'folder'}>
                        {kind === 'folder' ? <FolderIcon /> : <FileIcon />}{name}
                      </FileLink>
                    </Cell>
                    <Cell $right>{size}</Cell>
                    <Cell $right>{date}</Cell>
                    <Cell><MoreButton aria-label={`Actions for ${name}`}><DotsIcon /></MoreButton></Cell>
                  </Row>
                ))}
              </tbody>
            </FileTable>
          </Files>
        </Main>
        <ScrollTrack><ScrollThumb /></ScrollTrack>

        <LoadingLine />
        <Drawer>
          <DrawerEdge />
          <DrawerHandle aria-label="Expand"><Line w={10} h={7} box="0 0 12 8" sw={1.600} d="M1.500 1.500L6 6l4.500-4.500" /></DrawerHandle>
        </Drawer>
        <ActionLayer>
          <ActionBar>
            <ActionButton>Download</ActionButton>
            <ActionButton>Move</ActionButton>
            <ActionButton>Copy</ActionButton>
            <ActionButton>Compress</ActionButton>
            <ActionButton $danger>Delete</ActionButton>
          </ActionBar>
        </ActionLayer>
        <Slash width="14" height="42" viewBox="0 0 14 42"><path d="M1.500 3q1-2.500 3 1 3 12 6 35l-2.500.5Q3 22 1.500 3z" fill="#fff" /></Slash>
        <Pointer width="14" height="18" viewBox="0 0 14 18"><path d="M4 9.500V2.500a1.200 1.200 0 0 1 2.400 0V7l4.300.9c1 .2 1.500.9 1.400 1.900l-.4 3.600-1.300 3H5.500L1.700 11.500c-.6-1 .4-1.900 1.300-1.200z" fill="#fff" stroke="#222" strokeWidth=".7" /></Pointer>
        <StatusBubble>https://panel.play.hosting/server/52bc5888/files#/world</StatusBubble>
      </Viewport>

      <Taskbar>
        <Tray>
          <Clock>14:17<br />14/08/2026</Clock>
          <TrayIcons>
            <TrayPair>
              <Line w={11} h={11} sw={1} d="M1 4.500h2L5.500 2v8L3 7.500H1zM7.500 4.500q1 1.500 0 3M9 3q2 3 0 6M10.500 2q2.500 4 0 8" />
              <Line w={12} h={12} sw={1.100} d="M8 2H1v7h9V6M4 11h4M9 1v2.500h2V1M10 3.500V6" />
            </TrayPair>
            <span>ENG</span>
            <svg width="9" height="12" viewBox="0 0 9 12" fill="none" stroke="#3d74bd"><rect x="2.800" y=".7" width="3.400" height="6.500" rx="1.700" fill="#9dc0ea" /><path d="M.8 5.500q.3 3.500 3.700 3.500t3.700-3.500M4.500 9v2.500" /></svg>
            <svg width="12" height="11" viewBox="0 0 12 11"><path d="M3 8.500a2.500 2.500 0 0 1 0-5A3.500 3.500 0 0 1 9.500 4" fill="none" stroke="#555" strokeWidth="1.200" /><circle cx="8.300" cy="7.300" r="3.500" fill="#1b82d4" /><path d="M8.300 5.300v.8M8.300 6.800v2.300" stroke="#fff" /></svg>
            <Line w={8} h={8} d="M1.500 8L6 3.500 10.500 8" />
          </TrayIcons>
        </Tray>
        <Dock>
          <Apps>
            {dockApps.map(a => <AppButton key={a.name} aria-label={a.name} $tint={a.tint} $mark={a.mark}>{a.icon}</AppButton>)}
          </Apps>
          <SearchPill>
            <svg width="33" height="18" viewBox="0 0 33 18"><path d="M2 4q3-4 8-2h13q5-2 8 2l1.500 6q-2 7-8 7.500H8Q2 17 .500 10z" fill="#5b8f35" /><path d="M5 6h23l1 6q-4 4-12.500 4T4 12z" fill="#a9b95b" /><ellipse cx="16.500" cy="10" rx="8" ry="5" fill="#e3ad84" /><circle cx="8" cy="4.500" r="2" fill="#c9cf72" /><circle cx="25" cy="4.500" r="2" fill="#c9cf72" /><path d="M11 9.500l3 1.500M22 9.500l-3 1.500M13 13q3.500-1.500 7 0" stroke="#c95a48" fill="none" /></svg>
            <PillInput aria-label="Search" placeholder="חפש" />
            <Line w={11} h={11} sw={1.300} d="M9 5a4 4 0 1 1-8 0a4 4 0 0 1 8 0M8 8l3.200 3.200" />
          </SearchPill>
          <StartButton aria-label="Start"><svg width="16" height="16" viewBox="0 0 16 16"><path d="M0 0h7.500v7.500H0zM8.500 0H16v7.500H8.500zM0 8.500h7.500V16H0zM8.500 8.500H16V16H8.500z" fill="#1b8fdc" /></svg></StartButton>
        </Dock>
        <Weather>
          <div>31°C<WeatherNote>שמשי בעיקרו</WeatherNote></div>
          <svg width="15" height="15" viewBox="0 0 15 15"><circle cx="7" cy="7" r="6.500" fill="#ee9520" /><path d="M6 11.500a2 2 0 0 1 .5-3.900 3 3 0 0 1 5.300.6 1.700 1.700 0 0 1 .7 3.300z" fill="#dde6f5" /></svg>
        </Weather>
      </Taskbar>

      <Chat aria-label="Stream chat">
        {chat.map((m, i) => (
          <Message key={i}>
            <MessageLine>
              {m.author && (
                <Badges $wide={m.fan}>
                  <KickMark />
                  {m.fan && <svg width="27" height="14" viewBox="0 0 27 14"><path d="M6 0h5v7H8z" fill="#f2d08b" /><ellipse cx="5" cy="7.500" rx="3.800" ry="6" fill="#b238d8" /><path d="M14 1h5v12h-5zM20 1h5v12h-5z" fill="#2fb7c4" /><path d="M15.500 4h2M15.500 9h2M22 4h3M22 9h2" stroke="#0c3f46" strokeWidth="1.300" /></svg>}
                </Badges>
              )}
              {m.author && <><Author $color={m.color!}>{m.author}</Author><Body>{' : '}</Body></>}
              {typeof m.text === 'string' ? <Body $hebrew={m.hebrew}>{m.text}</Body> : m.text}
            </MessageLine>
            {m.more && <MessageLine><Body $hebrew={m.hebrew}>{m.more}</Body></MessageLine>}
          </Message>
        ))}
      </Chat>
    </Screen>
  );
}
